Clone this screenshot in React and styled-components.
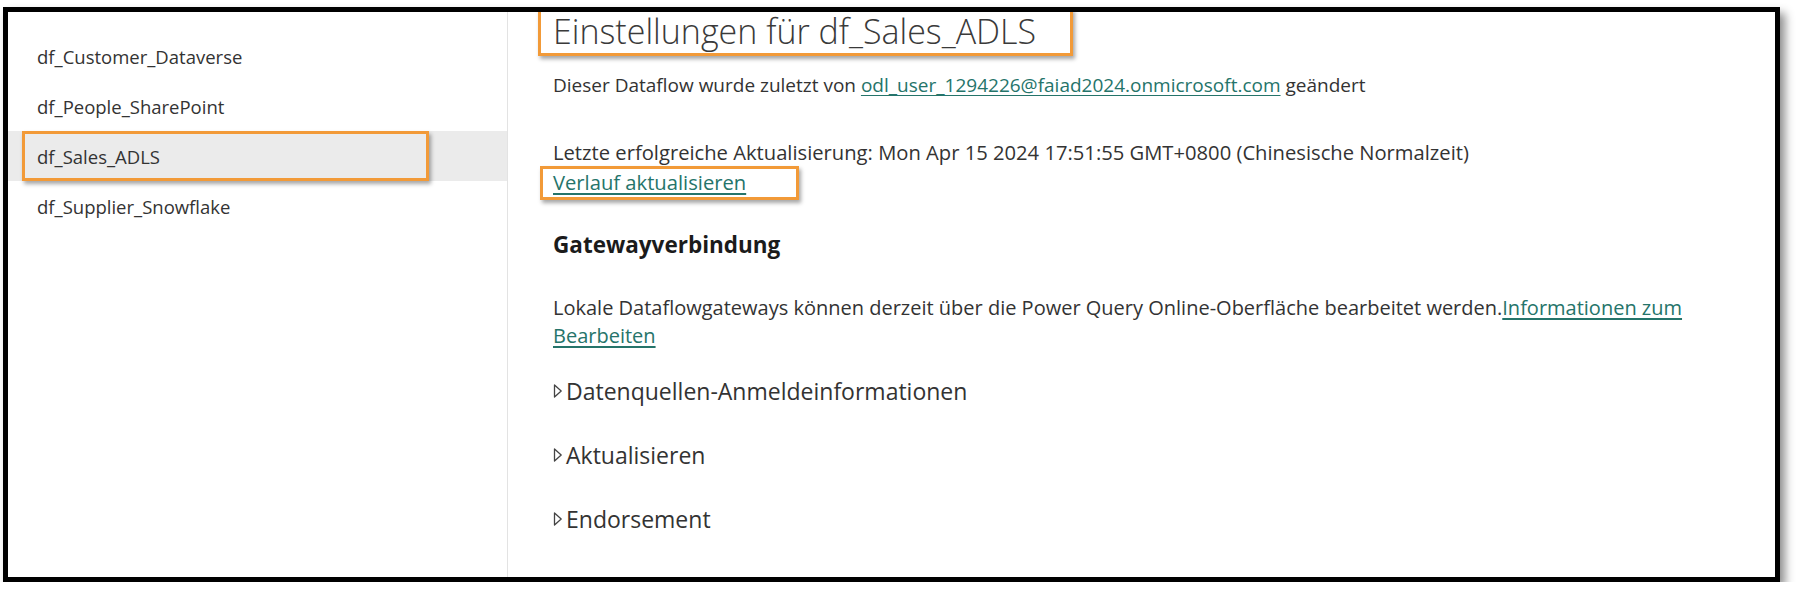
import React from 'react';
import styled, { createGlobalStyle } from 'styled-components';

const GlobalStyle = createGlobalStyle`
  html, body {
    margin: 0;
    padding: 0;
    background: #ffffff;
  }
  body {
    font-family: "Open Sans", "Noto Sans", "Liberation Sans", sans-serif;
    color: #333333;
  }
`;

const dataflows = ['df_Customer_Dataverse', 'df_People_SharePoint', 'df_Sales_ADLS', 'df_Supplier_Snowflake'];
const sections = ['Datenquellen-Anmeldeinformationen', 'Aktualisieren', 'Endorsement'];

const Caret = () => (
  <svg width="10" height="16" viewBox="0 0 10 16" aria-hidden="true">
    <path d="M1.5 2 L8.2 8 L1.5 14 Z" fill="none" stroke="#444" strokeWidth="1.3" strokeLinejoin="round" />
  </svg>
);

const App = () => {
  const active = 'df_Sales_ADLS';

  return (
    <>
      <GlobalStyle />
      <Frame>
        <Sidebar>
          {dataflows.map((name) => (
            <SideItem key={name} $active={name === active}>
              {name === active ? <SideMark>{name}</SideMark> : name}
            </SideItem>
          ))}
        </Sidebar>
        <Main>
          <Title>
            <Highlight $inset="-4px -37px -6px -15px">Einstellungen für df_Sales_ADLS</Highlight>
          </Title>
          <Info>
            Dieser Dataflow wurde zuletzt von <Link>odl_user_1294226@faiad2024.onmicrosoft.com</Link> geändert
          </Info>
          <RefreshBlock>
            <div>Letzte erfolgreiche Aktualisierung: Mon Apr 15 2024 17:51:55 GMT+0800 (Chinesische Normalzeit)</div>
            <div>
              <Highlight $inset="-1px -53px -3px -13px">
                <Link>Verlauf aktualisieren</Link>
              </Highlight>
            </div>
          </RefreshBlock>
          <SectionHeading>Gatewayverbindung</SectionHeading>
          <Paragraph>
            Lokale Dataflowgateways können derzeit über die Power Query Online-Oberfläche bearbeitet werden.
            <Link>Informationen zum</Link>
            <br />
            <Link>Bearbeiten</Link>
          </Paragraph>
          <Collapsibles>
            {sections.map((s) => (
              <Collapsible key={s}>
                <Caret />
                <span>{s}</span>
              </Collapsible>
            ))}
          </Collapsibles>
        </Main>
      </Frame>
    </>
  );
};

export default App;

const Frame = styled.div`
  display: grid;
  grid-template-columns: 500px 1fr;
  width: 1767px;
  height: 565px;
  margin: 7px 0 0 3px;
  border: 5px solid #000;
  background: #fff;
  box-shadow: 5px 6px 9px rgba(0, 0, 0, 0.45);
  overflow: hidden;
`;

const Sidebar = styled.nav`
  display: flex;
  flex-direction: column;
  padding-top: 19px;
  border-right: 1px solid #e3e3e3;
`;

const SideItem = styled.div`
  position: relative;
  display: flex;
  align-items: center;
  height: 50px;
  padding-left: 29px;
  font-size: 18.5px;
  color: #333;
  background: ${(p) => (p.$active ? '#ebebeb' : 'transparent')};
`;

// orange annotation frames drawn over the content
const Highlight = styled.span`
  position: relative;
  display: inline-block;
  &::after {
    content: '';
    position: absolute;
    inset: ${(p) => p.$inset};
    border: 3px solid #f29a38;
    box-shadow: 2px 3px 4px rgba(0, 0, 0, 0.35);
    pointer-events: none;
  }
`;

const SideMark = styled.span`
  &::after {
    content: '';
    position: absolute;
    inset: 0 78px 0 14px;
    border: 3px solid #f29a38;
    box-shadow: 2px 3px 4px rgba(0, 0, 0, 0.35);
    pointer-events: none;
  }
`;

const Main = styled.main`
  display: flex;
  flex-direction: column;
  padding-left: 45px;
  padding-right: 40px;
`;

const Title = styled.h1`
  margin: 0;
  font-size: 34px;
  line-height: 38px;
  font-weight: 300;
  color: #3a3a3a;
`;

const Info = styled.div`
  margin-top: 23px;
  font-size: 19px;
  line-height: 24px;
`;

const RefreshBlock = styled.div`
  margin-top: 40px;
  font-size: 20.2px;
  line-height: 30px;
`;

const Link = styled.a`
  color: #25746a;
  text-decoration: underline;
  text-underline-offset: 3px;
  cursor: pointer;
`;

const SectionHeading = styled.h2`
  margin: 33px 0 0;
  font-size: 22.5px;
  line-height: 30px;
  font-weight: 700;
  color: #1b1b1b;
`;

const Paragraph = styled.p`
  margin: 34px 0 0;
  font-size: 20px;
  line-height: 28px;
`;

const Collapsibles = styled.div`
  display: flex;
  flex-direction: column;
  gap: 34px;
  margin-top: 26px;
`;

const Collapsible = styled.div`
  display: flex;
  align-items: center;
  gap: 3px;
  font-size: 23px;
  line-height: 30px;
  color: #333;
`;
